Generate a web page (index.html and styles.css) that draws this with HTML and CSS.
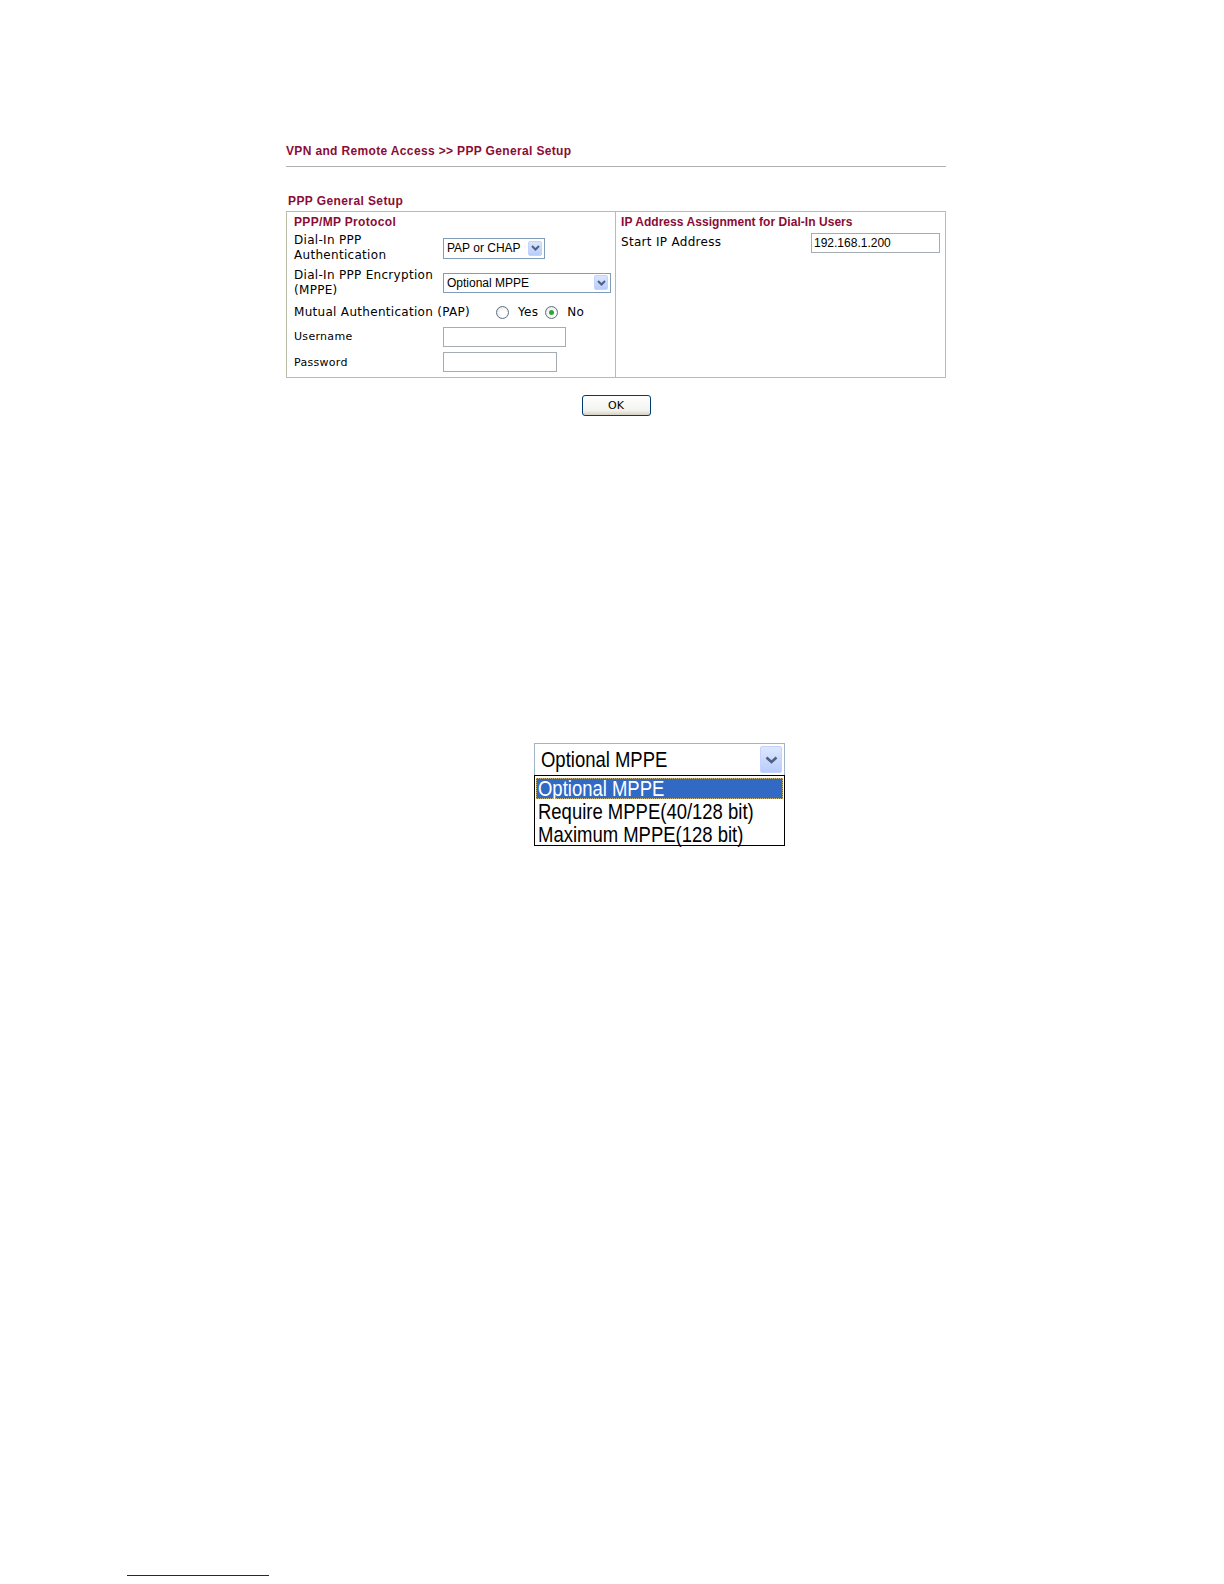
FILE: index.html
```html
<!DOCTYPE html>
<html>
<head>
<meta charset="utf-8">
<link rel="stylesheet" href="styles.css">
</head>
<body>
<div class="page">
  <div class="crumb">VPN and Remote Access &gt;&gt; PPP General Setup</div>
  <div class="rule"></div>
  <div class="sec-title">PPP General Setup</div>
  <div class="panel">
    <div class="cell left">
      <div class="head head-ppp">PPP/MP Protocol</div>
      <div class="row r1">
        <div class="label">Dial-In PPP<br>Authentication</div>
        <div class="select s1"><span class="sv">PAP or CHAP</span><span class="arrow"><svg width="9" height="6" viewBox="0 0 9 6"><path d="M1 1 L4.5 4.5 L8 1" fill="none" stroke="#4d6185" stroke-width="2"/></svg></span></div>
      </div>
      <div class="row r2">
        <div class="label">Dial-In PPP Encryption<br>(MPPE)</div>
        <div class="select s2"><span class="sv">Optional MPPE</span><span class="arrow"><svg width="9" height="6" viewBox="0 0 9 6"><path d="M1 1 L4.5 4.5 L8 1" fill="none" stroke="#4d6185" stroke-width="2"/></svg></span></div>
      </div>
      <div class="row r3">
        <div class="label nowrap">Mutual Authentication (PAP)</div>
        <div class="radios">
          <span class="radio"></span><span class="rl">Yes</span>
          <span class="radio on"></span><span class="rl">No</span>
        </div>
      </div>
      <div class="row r4">
        <div class="label small">Username</div>
        <div class="input i-user"></div>
      </div>
      <div class="row r5">
        <div class="label small">Password</div>
        <div class="input i-pass"></div>
      </div>
    </div>
    <div class="cell right">
      <div class="head head-ip">IP Address Assignment for Dial-In Users</div>
      <div class="row rip">
        <div class="label">Start IP Address</div>
        <div class="input i-ip"><span class="iv">192.168.1.200</span></div>
      </div>
    </div>
  </div>
  <div class="actions"><button class="ok" type="button">OK</button></div>
</div>

<div class="zoomfig">
  <div class="big-select"><span class="nt">Optional MPPE</span><span class="big-arrow"><svg width="13" height="8" viewBox="0 0 13 8"><path d="M1.5 1.5 L6.5 6 L11.5 1.5" fill="none" stroke="#4d6185" stroke-width="2.6"/></svg></span></div>
  <div class="big-list">
    <div class="opt sel"><span class="nt">Optional MPPE</span></div>
    <div class="opt"><span class="nt">Require MPPE(40/128 bit)</span></div>
    <div class="opt"><span class="nt">Maximum MPPE(128 bit)</span></div>
  </div>
</div>

<div class="footnote-rule"></div>
</body>
</html>
```

FILE: styles.css
```css
html, body {
  margin: 0;
  padding: 0;
  background: #ffffff;
}
body {
  width: 1224px;
  height: 1584px;
  font-family: "DejaVu Sans", Verdana, sans-serif;
  font-size: 12px;
  color: #000;
  overflow: hidden;
}
.page {
  margin-left: 286px;
  padding-top: 144px;
  width: 660px;
}
.crumb {
  font-family: "Liberation Sans", Arial, sans-serif;
  font-weight: bold;
  font-size: 12px;
  line-height: 14px;
  letter-spacing: 0.35px;
  color: #8a0c37;
}
.rule {
  margin-top: 8px;
  height: 1px;
  background: #b0b0b0;
}
.sec-title {
  margin-top: 27px;
  margin-left: 2px;
  font-family: "Liberation Sans", Arial, sans-serif;
  font-weight: bold;
  font-size: 12px;
  line-height: 14px;
  letter-spacing: 0.4px;
  color: #8a0c37;
}
.panel {
  margin-top: 3px;
  width: 658px;
  height: 165px;
  border: 1px solid #b9bca6;
  display: grid;
  grid-template-columns: 329px 329px;
}
.cell {
  padding-top: 3px;
}
.cell.left {
  border-right: 1px solid #b9bca6;
  padding-left: 7px;
}
.cell.right {
  padding-left: 5px;
}
.head {
  height: 14px;
  line-height: 14px;
  font-family: "Liberation Sans", Arial, sans-serif;
  font-weight: bold;
  font-size: 12px;
  color: #8a0c37;
}
.head-ppp {
  letter-spacing: 0.33px;
}
.head-ip {
  letter-spacing: 0.05px;
}
.row {
  display: flex;
  align-items: center;
}
.label {
  width: 149px;
  flex: none;
  line-height: 15px;
  letter-spacing: 0.3px;
}
.label.small {
  font-size: 11px;
}
.label.nowrap {
  white-space: nowrap;
}
.r1 { height: 38px; }
.r2 { height: 31px; }
.r3 { height: 28px; }
.r4 { height: 21px; }
.r5 { height: 30px; }
.rip { height: 27px; }
.rip .label { width: 190px; }

.select {
  box-sizing: border-box;
  height: 20px;
  border: 1px solid #7f9db9;
  display: flex;
  align-items: center;
  justify-content: space-between;
  padding: 0 2px 0 3px;
  font-family: "Liberation Sans", Arial, sans-serif;
  font-size: 12px;
  background: #fff;
}
.s1 { width: 102px; height: 21px; }
.s2 { width: 168px; }
.arrow {
  width: 14px;
  height: 15px;
  box-sizing: border-box;
  border: 1px solid #c3d3fd;
  background: linear-gradient(#dbe6fe, #b9cdfb);
  border-radius: 2px;
  display: flex;
  align-items: center;
  justify-content: center;
}
.radios {
  display: flex;
  align-items: center;
  margin-left: 53px;
  letter-spacing: 0.3px;
}
.radio {
  box-sizing: border-box;
  width: 13px;
  height: 13px;
  flex: none;
  border-radius: 50%;
  border: 1px solid #5d6f82;
  background: radial-gradient(circle at 60% 60%, #ffffff 30%, #dcdcd6 100%);
  position: relative;
}
.radio.on::after {
  content: "";
  position: absolute;
  left: 3px;
  top: 3px;
  width: 5px;
  height: 5px;
  border-radius: 50%;
  background: #2fa33c;
}
.rl {
  margin-left: 9px;
  margin-right: 7px;
}
.input {
  box-sizing: border-box;
  height: 20px;
  border: 1px solid #a5acb2;
  background: #fff;
  font-family: "Liberation Sans", Arial, sans-serif;
  font-size: 12px;
  line-height: 18px;
  padding-left: 2px;
}
.i-user { width: 123px; }
.i-pass { width: 114px; }
.i-ip { width: 129px; }

.actions {
  display: flex;
  justify-content: center;
  margin-top: 17px;
}
.ok {
  width: 69px;
  height: 21px;
  box-sizing: border-box;
  border: 1px solid #003c74;
  border-radius: 3px;
  background: linear-gradient(#ffffff, #f3f3ee 75%, #d6d0c5);
  font-family: "DejaVu Sans", Tahoma, sans-serif;
  font-size: 11px;
  padding: 0;
  color: #000;
}

.zoomfig {
  margin-left: 534px;
  margin-top: 327px;
  width: 251px;
}
.nt {
  display: inline-block;
  transform: scaleX(0.84);
  transform-origin: left center;
  white-space: nowrap;
  margin-right: -60px;
}
.big-select {
  box-sizing: border-box;
  height: 32px;
  border: 1px solid #a0b4c8;
  border-bottom: none;
  display: flex;
  align-items: center;
  justify-content: space-between;
  padding: 0 2px 0 6px;
  font-family: "Liberation Sans", Arial, sans-serif;
  font-size: 22px;
  background: #fff;
}
.big-arrow {
  width: 22px;
  height: 27px;
  flex: none;
  box-sizing: border-box;
  border: 1px solid #c3d3fd;
  background: linear-gradient(#dde7fe, #b8ccfb);
  border-radius: 2px;
  display: flex;
  align-items: center;
  justify-content: center;
}
.big-list {
  box-sizing: border-box;
  height: 71px;
  border: 1px solid #000;
  padding: 2px 1px 0 1px;
  font-family: "Liberation Sans", Arial, sans-serif;
  font-size: 22px;
}
.opt {
  height: 23px;
  line-height: 23px;
  padding-left: 2px;
  white-space: nowrap;
}
.opt.sel {
  height: 21px;
  line-height: 21px;
  margin-bottom: 1px;
  background: #316ac5;
  color: #fff;
  outline: 1px dotted #c9b57a;
  outline-offset: -1px;
}

.footnote-rule {
  margin-left: 127px;
  margin-top: 729px;
  width: 142px;
  height: 1px;
  background: #1b1b9a;
}
```
